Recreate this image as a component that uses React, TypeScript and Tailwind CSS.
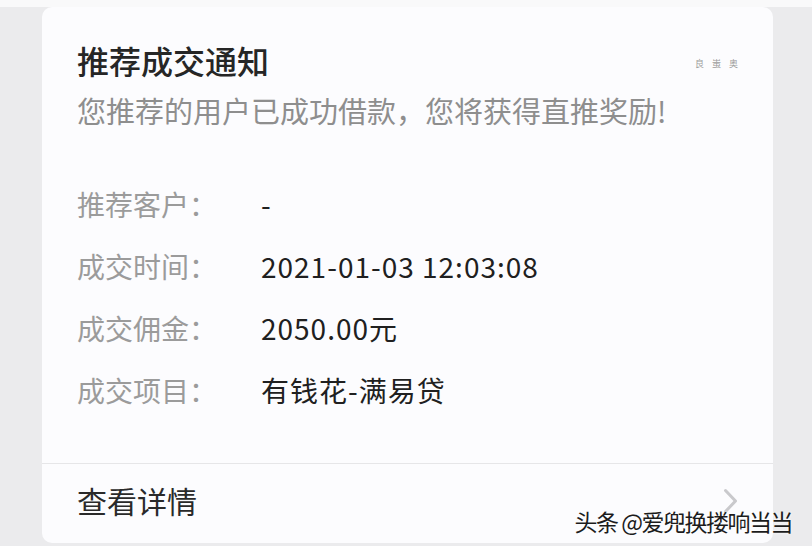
const rows = [
  { label: '推荐客户：', value: '-' },
  { label: '成交时间：', value: '2021-01-03 12:03:08' },
  { label: '成交佣金：', value: '2050.00元' },
  { label: '成交项目：', value: '有钱花-满易贷' },
]

const font = "font-['Noto_Sans_CJK_SC','Noto_Sans',sans-serif]"

export default function App() {
  return (
    <div className={`relative w-[812px] h-[546px] overflow-hidden bg-[#ebebed] ${font}`}>
      <div className="h-[7px] bg-[#f9f9fa]" />
      <div className="ml-[42px] w-[731px] h-[536px] bg-[#fcfcfe] rounded-[10px] flex flex-col">
        {/* 头部 */}
        <div className="pl-[35px] pr-[32px] pt-[33px]">
          <div className="flex items-center justify-between h-[40px]">
            <h1 className="text-[32px] leading-[40px] text-[#262626] font-medium">推荐成交通知</h1>
            <span className="text-[9px] tracking-[3px] text-[#9c9c9c] mt-[8px]">良 蚩 奥</span>
          </div>
          <p className="mt-[12px] text-[29px] leading-[36px] text-[#8e8e8e]">
            您推荐的用户已成功借款，您将获得直推奖励!
          </p>
        </div>

        {/* 明细 */}
        <div className="pl-[35px] mt-[58px] flex flex-col gap-[26px]">
          {rows.map(r => (
            <div key={r.label} className="flex items-center h-[36px] text-[28px] leading-[36px]">
              <span className="w-[184px] text-[#9b9b9b]">{r.label}</span>
              <span className="text-[#202020] tracking-[1px]">{r.value}</span>
            </div>
          ))}
        </div>

        <div className="mt-auto border-t border-[#e6e6e8] h-[80px] flex items-center justify-between pl-[35px] pr-[35px] pb-[6px]">
          <span className="text-[30px] text-[#2a2a2a]">查看详情</span>
          <svg width="15" height="26" viewBox="0 0 15 26" fill="none" stroke="#c9c9cc" strokeWidth="3" strokeLinecap="round" strokeLinejoin="round">
            <polyline points="2.5,2.5 12.5,13 2.5,23.5" />
          </svg>
        </div>
      </div>

      {/* 水印 */}
      <div className="absolute right-[20px] bottom-[11px] text-[23px] leading-[28px] tracking-[-1.5px] text-[#1c1c1c] [text-shadow:0_0_3px_#ffffff]">
        头条 @爱兜换搂响当当
      </div>
    </div>
  )
}
